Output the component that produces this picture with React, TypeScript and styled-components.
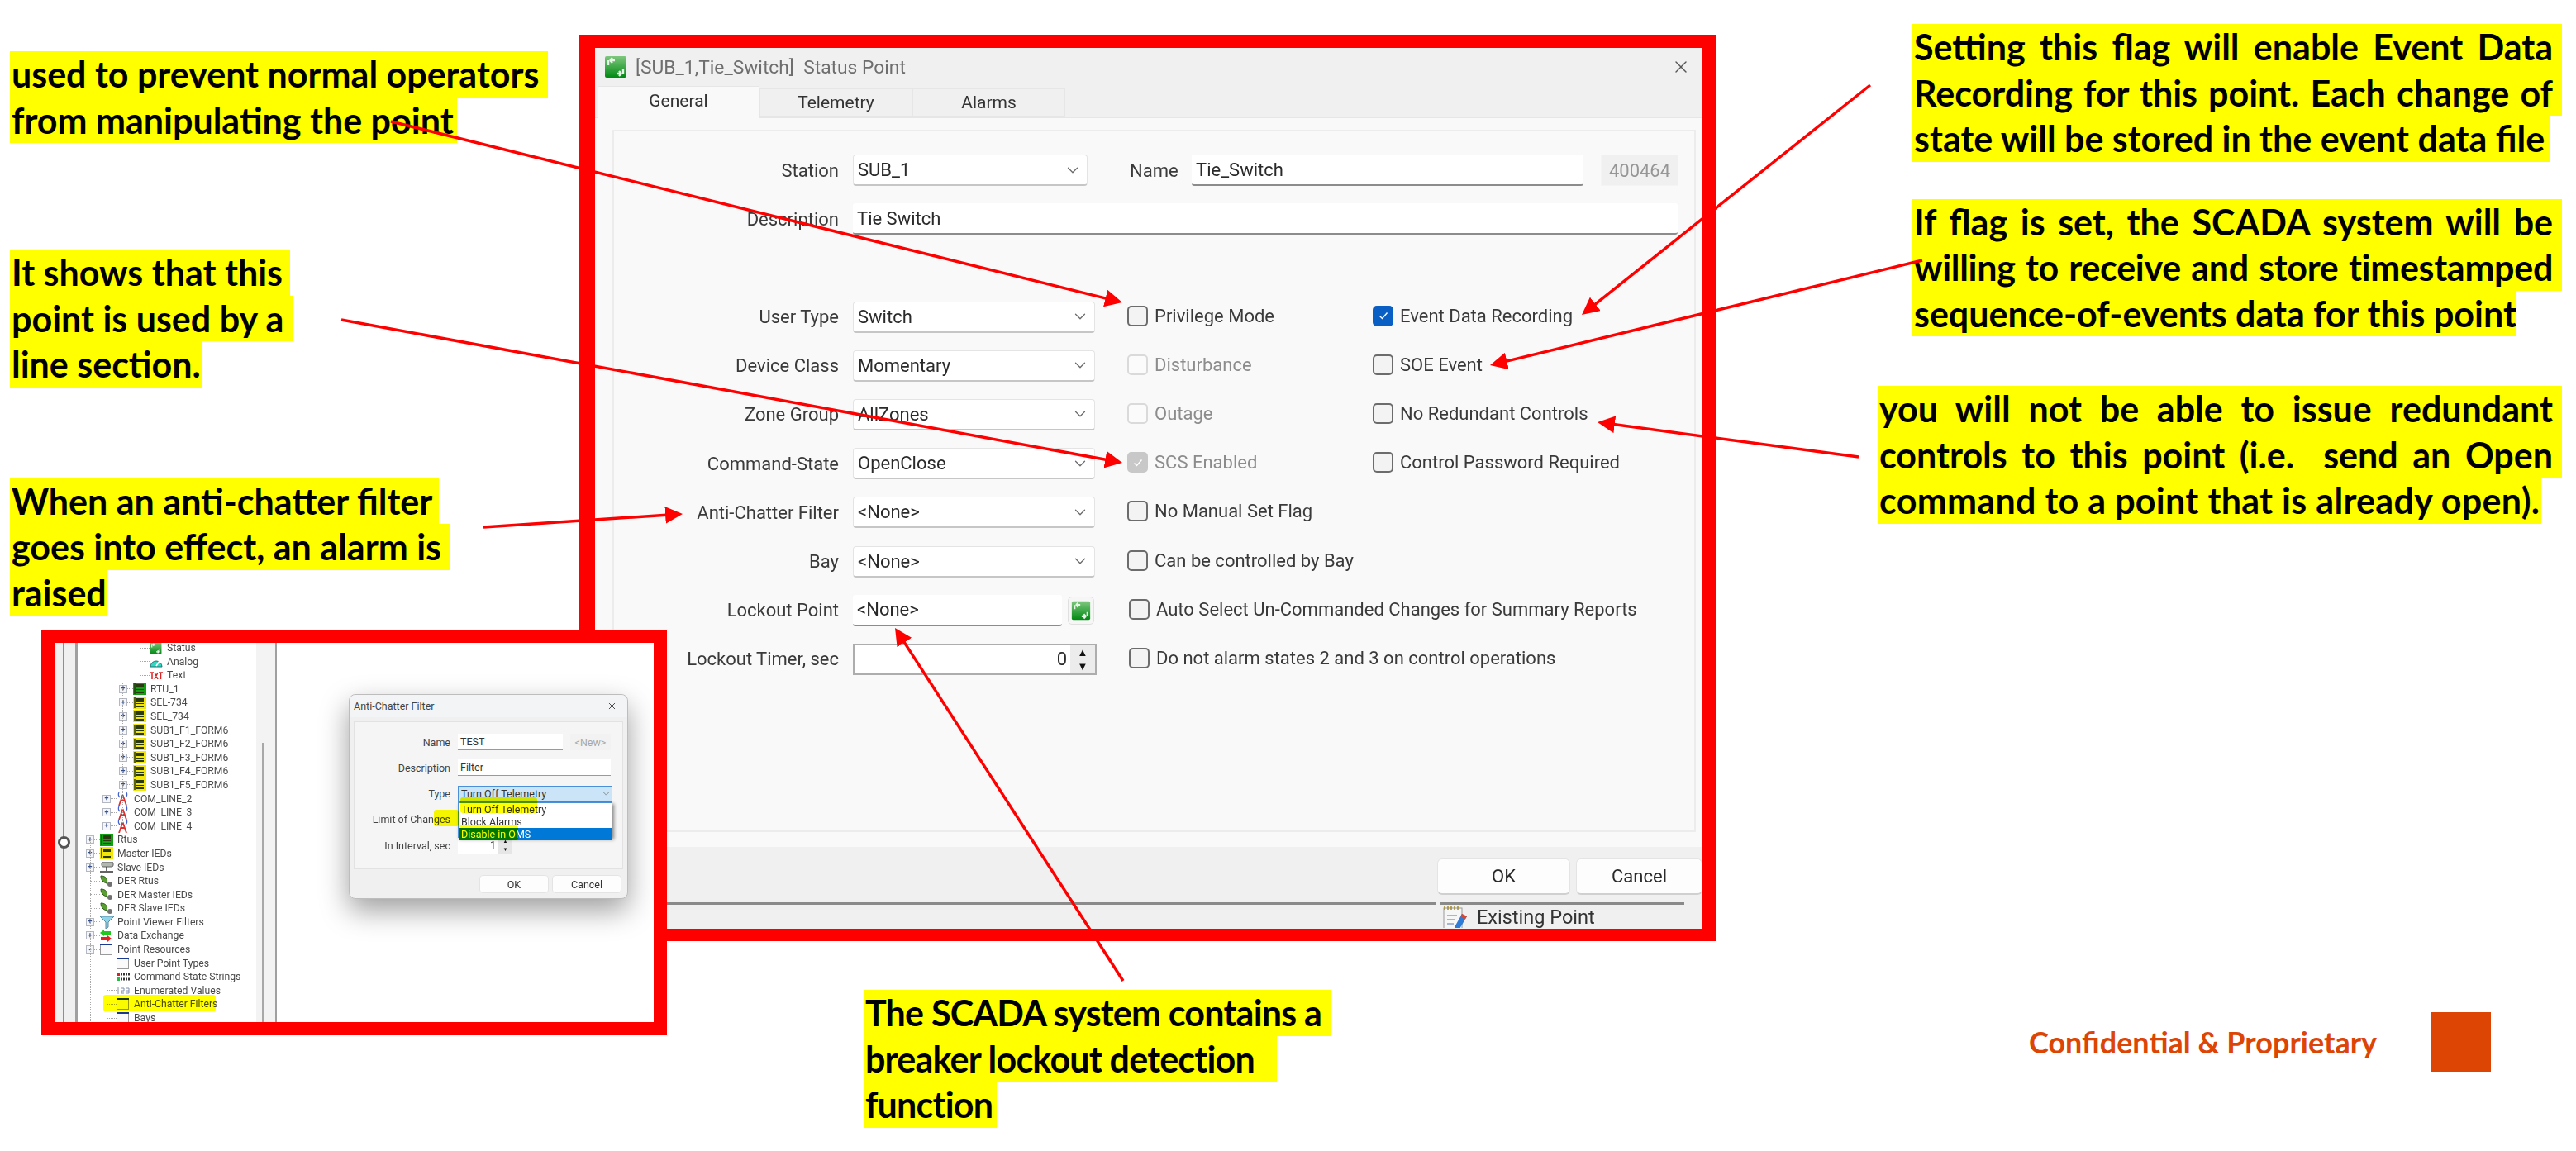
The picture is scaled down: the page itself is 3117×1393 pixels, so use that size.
import React from "react";
import styled, { createGlobalStyle } from "styled-components";
import { ChevronDown, X } from "lucide-react";

const RED = "#ff0000";
const YELLOW = "#ffff00";
const UI_FONT = `Roboto, "Liberation Sans", sans-serif`;

const GlobalStyle = createGlobalStyle`
  html, body {
    margin: 0;
    padding: 0;
    background: #ffffff;
  }
  * {
    box-sizing: border-box;
  }
`;

const Slide = styled.div`
  position: relative;
  display: flex;
  width: 3117px;
  height: 1393px;
  overflow: hidden;
  background: #ffffff;
  font-family: ${UI_FONT};
`;

const LeftColumn = styled.div`
  display: flex;
  flex-direction: column;
  align-items: flex-start;
  flex: none;
  width: 700px;
  padding: 62px 0 0 12px;
`;

const CenterColumn = styled.div`
  display: flex;
  flex-direction: column;
  flex: none;
  width: 1376px;
  padding-top: 42px;
`;

const RightColumn = styled.div`
  display: flex;
  flex-direction: column;
  align-items: flex-start;
  flex: none;
  width: 1041px;
  padding-top: 29px;
`;

/* ---------- yellow callouts ---------- */

const Note = styled.div<{ $top?: number; $left?: number }>`
  display: flex;
  flex-direction: column;
  align-items: flex-start;
  margin-top: ${(p) => p.$top ?? 0}px;
  margin-left: ${(p) => p.$left ?? 0}px;
`;

const NoteLine = styled.div<{ $width: number; $justify?: boolean; $spacing?: number }>`
  width: ${(p) => p.$width}px;
  height: 55.5px;
  padding: 0 ${(p) => (p.$justify ? 11 : 0)}px 0 2px;
  background: ${YELLOW};
  color: #000000;
  font-family: Lato, "Liberation Sans", sans-serif;
  font-size: 43px;
  font-weight: 700;
  line-height: 55px;
  white-space: nowrap;
  letter-spacing: ${(p) => p.$spacing ?? 0}px;
  text-align: ${(p) => (p.$justify ? "justify" : "left")};
  text-align-last: ${(p) => (p.$justify ? "justify" : "left")};
`;

const Confidential = styled.div`
  display: flex;
  align-items: center;
  gap: 66px;
  margin: 591px 0 0 379px;
  color: #dd4505;
  font-family: Lato, "Liberation Sans", sans-serif;
  font-size: 36px;
  font-weight: 700;
`;

const BrandSquare = styled.div`
  width: 72px;
  height: 72px;
  background: #dd4505;
`;

/* ---------- main dialog ---------- */

const MainFrame = styled.div`
  flex: none;
  width: 1376px;
  height: 1097px;
  border-style: solid;
  border-color: ${RED};
  border-width: 16px 16px 15px 20px;
`;

const Dialog = styled.div`
  display: flex;
  flex-direction: column;
  height: 100%;
  overflow: hidden;
  background: #f0f0f0;
  filter: blur(0.45px);
`;

const TitleBar = styled.div`
  display: flex;
  align-items: center;
  flex: none;
  height: 46px;
  padding: 0 14px 0 11px;
  gap: 10px;
  color: #6e6e6e;
  font-size: 22.8px;
`;

const TitleText = styled.span`
  flex: 1;
  white-space: pre;
`;

const TabStrip = styled.div`
  display: flex;
  align-items: flex-end;
  flex: none;
  height: 39px;
  padding-left: 3px;
  border-bottom: 2px solid #e6e6e6;
`;

const Tab = styled.div<{ $active?: boolean; $width: number }>`
  display: flex;
  align-items: center;
  justify-content: center;
  width: ${(p) => p.$width}px;
  height: ${(p) => (p.$active ? 39 : 34)}px;
  margin-bottom: ${(p) => (p.$active ? -2 : 0)}px;
  padding-bottom: ${(p) => (p.$active ? 4 : 0)}px;
  background: ${(p) => (p.$active ? "#f9f9f9" : "#f0f0f0")};
  border: 1px solid #e6e6e6;
  border-bottom: ${(p) => (p.$active ? "none" : "1px solid #e6e6e6")};
  color: #333333;
  font-size: 21px;
`;

const TabBody = styled.div`
  flex: none;
  height: 882px;
  padding: 14px 8px 18px 21px;
  background: #f9f9f9;
`;

const Panel = styled.div`
  display: grid;
  grid-auto-rows: 38px;
  row-gap: 21.2px;
  align-content: start;
  height: 100%;
  padding-top: 28px;
  border: 2px solid #ececec;
  background: #f9f9f9;
`;

const FormRow = styled.div`
  display: flex;
  align-items: center;
  color: #333333;
  font-size: 22px;
`;

const FieldLabel = styled.label`
  flex: none;
  width: 272px;
  margin-right: 17px;
  color: #3a3a3a;
  text-align: right;
  white-space: nowrap;
`;

const Combo = styled.div<{ $width?: number }>`
  display: flex;
  align-items: center;
  justify-content: space-between;
  flex: none;
  width: ${(p) => p.$width ?? 293}px;
  height: 38px;
  padding: 0 6px 0 5px;
  background: #ffffff;
  border: 1px solid #e4e4e4;
  border-bottom: 2px solid #c6c6c6;
  border-radius: 4px;
  color: #2a2a2a;
`;

const TextField = styled.div<{ $width: number }>`
  display: flex;
  align-items: center;
  flex: none;
  width: ${(p) => p.$width}px;
  height: 38px;
  padding-left: 5px;
  background: #ffffff;
  border-bottom: 2px solid #8c8c8c;
  border-radius: 3px;
  color: #2a2a2a;
  white-space: nowrap;
`;

const ReadOnlyBox = styled.div`
  display: flex;
  align-items: center;
  justify-content: center;
  flex: none;
  width: 94px;
  height: 38px;
  margin-left: 21px;
  background: #f0f0f0;
  border: 1px solid #f4f4f4;
  color: #969696;
`;

const InlineLabel = styled.label`
  flex: none;
  width: 57px;
  margin: 0 18px 0 51px;
  color: #3a3a3a;
`;

const PickButton = styled.div`
  display: flex;
  align-items: center;
  justify-content: center;
  flex: none;
  width: 32px;
  height: 34px;
  margin: 0 3px 0 7px;
  background: #f6f6f6;
  border: 1px solid #e0e0e0;
  border-radius: 5px;
`;

const SpinField = styled.div`
  display: flex;
  align-items: stretch;
  flex: none;
  width: 295px;
  height: 38px;
  background: #ffffff;
  border: 2px solid #adadad;
`;

const SpinValue = styled.div`
  flex: 1;
  padding-right: 4px;
  color: #2a2a2a;
  line-height: 34px;
  text-align: right;
`;

const SpinArrows = styled.div`
  display: flex;
  flex-direction: column;
  align-items: center;
  justify-content: space-around;
  flex: none;
  width: 30px;
  background: #ececec;
  color: #111111;
  font-size: 13px;
  line-height: 1;
`;

const CheckCell = styled.div<{ $width?: number; $dim?: boolean }>`
  display: flex;
  align-items: center;
  gap: 8px;
  flex: none;
  width: ${(p) => (p.$width ? `${p.$width}px` : "auto")};
  margin-top: -3px;
  color: ${(p) => (p.$dim ? "#8c8c8c" : "#3a3a3a")};
  white-space: nowrap;
`;

const CheckColumns = styled.div`
  display: flex;
  margin-left: 39px;
`;

const CheckBox = styled.span<{ $state: "off" | "on" | "dim" | "dimOn" }>`
  display: flex;
  align-items: center;
  justify-content: center;
  flex: none;
  width: 25px;
  height: 25px;
  border-radius: 5px;
  border: 2px solid
    ${(p) =>
      p.$state === "on"
        ? "#0a5fc4"
        : p.$state === "dimOn"
          ? "#c8c8c8"
          : p.$state === "dim"
            ? "#dadada"
            : "#6c6c6c"};
  background: ${(p) =>
    p.$state === "on"
      ? "#0a5fc4"
      : p.$state === "dimOn"
        ? "#c8c8c8"
        : p.$state === "dim"
          ? "#fbfbfb"
          : "#f3f3f3"};
`;

const Footer = styled.div`
  display: flex;
  flex-direction: column;
  flex: 1;
  min-height: 0;
  background: #f0f0f0;
`;

const ButtonRow = styled.div`
  display: flex;
  justify-content: flex-end;
  flex: none;
  gap: 7px;
  height: 67px;
  padding-top: 14px;
`;

const PushButton = styled.div<{ $width: number }>`
  display: flex;
  align-items: center;
  justify-content: center;
  flex: none;
  width: ${(p) => p.$width}px;
  height: 44px;
  background: #fdfdfd;
  border: 1px solid #e4e4e4;
  border-bottom: 2px solid #d0d0d0;
  border-radius: 6px;
  color: #2a2a2a;
  font-size: 22px;
`;

const StatusBar = styled.div`
  display: flex;
  flex: 1;
  gap: 5px;
  padding-right: 22px;
`;

const StatusCell = styled.div<{ $width?: number }>`
  display: flex;
  align-items: center;
  gap: 8px;
  flex: ${(p) => (p.$width ? "none" : 1)};
  width: ${(p) => (p.$width ? `${p.$width}px` : "auto")};
  padding-left: 2px;
  border-top: 3px solid #8a8a8a;
  color: #333333;
  font-size: 23.5px;
  line-height: 24px;
  white-space: nowrap;
`;

/* ---------- small inset picture ---------- */

const InsetFrame = styled.div`
  position: relative;
  z-index: 2;
  flex: none;
  width: 757px;
  height: 491px;
  margin: 17px 0 0 38px;
  border: 16px solid ${RED};
  background: #ffffff;
`;

const InsetContent = styled.div`
  position: relative;
  display: flex;
  height: 100%;
  overflow: hidden;
  filter: blur(0.45px);
`;

const SideStrip = styled.div`
  position: relative;
  flex: none;
  width: 28px;
  background: #f0f0f0;
  border-right: 3px solid #a0a0a0;
  &::before {
    content: "";
    position: absolute;
    top: 0;
    bottom: 0;
    left: 10px;
    width: 2px;
    background: #8f8f8f;
  }
`;

const SplitHandle = styled.span`
  position: absolute;
  top: 234px;
  left: 4px;
  width: 15px;
  height: 15px;
  background: #ffffff;
  border: 3px solid #555555;
  border-radius: 50%;
`;

const TreePane = styled.div`
  position: relative;
  flex: none;
  width: 216px;
  margin-top: -2.3px;
  color: #4a4a4a;
  font-size: 12.2px;
`;

const GuideLine = styled.span<{ $left: number; $top: number; $height: number }>`
  position: absolute;
  left: ${(p) => p.$left}px;
  top: ${(p) => p.$top}px;
  height: ${(p) => p.$height}px;
  border-left: 1px dotted #a8a8a8;
`;

const TreeRow = styled.div<{ $indent: number }>`
  display: flex;
  align-items: center;
  height: 16.6px;
  padding-left: ${(p) => p.$indent}px;
  white-space: nowrap;
`;

const TreeSlot = styled.span`
  display: flex;
  align-items: center;
  flex: none;
  width: 18px;
  height: 100%;
`;

const Expander = styled.span`
  display: flex;
  align-items: center;
  justify-content: center;
  flex: none;
  width: 10px;
  height: 10px;
  margin-left: 1px;
  background: #f4f6fa;
  border: 1px solid #b4b8c2;
  color: #38508a;
  font-size: 9px;
  font-weight: 700;
  line-height: 1;
`;

const TreeDash = styled.span<{ $full?: boolean }>`
  flex: 1;
  margin-left: ${(p) => (p.$full ? 6 : 0)}px;
  border-top: 1px dotted #a8a8a8;
`;

const TreeIconBox = styled.span`
  display: flex;
  align-items: center;
  flex: none;
  width: 21px;
`;

const TreeGutter = styled.div`
  position: relative;
  flex: none;
  width: 25px;
  background: #f3f3f3;
  border-right: 2px solid #a0a0a0;
`;

const ScrollThumb = styled.span`
  position: absolute;
  top: 121px;
  bottom: 0;
  left: 7px;
  width: 2px;
  background: #a8a8a8;
`;

const TreeMark = styled.span`
  position: absolute;
  left: 59px;
  top: 426px;
  width: 136px;
  height: 20px;
  background: ${YELLOW};
  border-radius: 3px;
  mix-blend-mode: multiply;
`;

const MiniDialog = styled.div`
  position: absolute;
  left: 356px;
  top: 62px;
  display: flex;
  flex-direction: column;
  width: 338px;
  height: 248px;
  background: #f0f0f0;
  border: 1px solid #bdbdbd;
  border-radius: 8px;
  box-shadow: 0 14px 34px rgba(0, 0, 0, 0.38);
  color: #444444;
  font-size: 12.5px;
`;

const MiniTitle = styled.div`
  display: flex;
  align-items: center;
  justify-content: space-between;
  flex: none;
  height: 27px;
  padding: 0 12px 0 5px;
  background: #f2f4f6;
  border-radius: 8px 8px 0 0;
`;

const MiniPanel = styled.div`
  position: relative;
  display: grid;
  grid-auto-rows: 20px;
  row-gap: 11.25px;
  align-content: start;
  flex: none;
  height: 179px;
  margin: 5px 5px 0 5px;
  padding-top: 14px;
  background: #f5f5f5;
  border: 1px solid #e2e2e2;
`;

const MiniRow = styled.div`
  display: flex;
  align-items: center;
`;

const MiniLabel = styled.label`
  flex: none;
  width: 116px;
  margin-right: 9px;
  text-align: right;
  white-space: nowrap;
`;

const MiniField = styled.div<{ $width: number; $filled?: boolean }>`
  display: flex;
  align-items: center;
  flex: none;
  width: ${(p) => p.$width}px;
  height: 20px;
  padding-left: 3px;
  background: ${(p) => (p.$filled ? "#cce4f7" : "#ffffff")};
  border: ${(p) => (p.$filled ? "1px solid #4a90d9" : "none")};
  border-bottom: ${(p) => (p.$filled ? "1px solid #4a90d9" : "1px solid #9a9a9a")};
  justify-content: ${(p) => (p.$filled ? "space-between" : "flex-start")};
  color: #333333;
`;

const MiniTag = styled.div`
  display: flex;
  align-items: center;
  justify-content: center;
  flex: none;
  width: 49px;
  height: 20px;
  margin-left: 9px;
  background: #f2f2f2;
  color: #a8a8a8;
`;

const MiniList = styled.div`
  position: absolute;
  left: 125px;
  top: 97px;
  display: flex;
  flex-direction: column;
  width: 187px;
  height: 43px;
  background: #ffffff;
  border: 1px solid #4a90d9;
  box-shadow: 2px 2px 4px rgba(0, 0, 0, 0.45);
  color: #333333;
`;

const MiniOption = styled.div<{ $selected?: boolean }>`
  display: flex;
  align-items: center;
  flex: 1;
  padding-left: 3px;
  background: ${(p) => (p.$selected ? "#0078d7" : "transparent")};
  color: ${(p) => (p.$selected ? "#ffffff" : "#333333")};
`;

const MiniMark = styled.span<{ $left: number; $top: number; $width: number; $height: number }>`
  position: absolute;
  left: ${(p) => p.$left}px;
  top: ${(p) => p.$top}px;
  width: ${(p) => p.$width}px;
  height: ${(p) => p.$height}px;
  background: ${YELLOW};
  border-radius: 3px;
  mix-blend-mode: multiply;
`;

const MiniButtons = styled.div`
  display: flex;
  justify-content: flex-end;
  flex: none;
  gap: 4px;
  padding: 7px 7px 0 0;
`;

const MiniButton = styled.div`
  display: flex;
  align-items: center;
  justify-content: center;
  width: 84px;
  height: 22px;
  background: #fdfdfd;
  border: 1px solid #e4e4e4;
  border-radius: 4px;
  color: #333333;
`;

const MiniSpin = styled.div`
  display: flex;
  flex: none;
  width: 66px;
  height: 20px;
  background: #ffffff;
`;

const MiniSpinValue = styled.div`
  flex: 1;
  padding-right: 3px;
  line-height: 20px;
  text-align: right;
`;

const MiniSpinArrows = styled.div`
  display: flex;
  flex-direction: column;
  align-items: center;
  justify-content: space-around;
  flex: none;
  width: 17px;
  background: #e6e6e6;
  color: #111111;
  font-size: 6px;
  line-height: 1;
`;

/* ---------- arrows on top of everything ---------- */

const ArrowLayer = styled.svg`
  position: absolute;
  left: 0;
  top: 0;
  z-index: 3;
  pointer-events: none;
`;

type NoteData = { text: string; width: number; justify?: boolean; spacing?: number };

const leftNotes: { top: number; lines: NoteData[] }[] = [
  {
    top: 0,
    lines: [
      { text: "used to prevent normal operators", width: 651 },
      { text: "from manipulating the point", width: 541 },
    ],
  },
  {
    top: 129,
    lines: [
      { text: "It shows that this", width: 339 },
      { text: "point is used by a", width: 342 },
      { text: "line section.", width: 232 },
    ],
  },
  {
    top: 110,
    lines: [
      { text: "When an anti-chatter filter", width: 519 },
      { text: "goes into effect, an alarm is", width: 533 },
      { text: "raised", width: 117 },
    ],
  },
];

const rightNotes: { top: number; left: number; lines: NoteData[] }[] = [
  {
    top: 0,
    left: 238,
    lines: [
      { text: "Setting this flag will enable Event Data", width: 786, justify: true },
      { text: "Recording for this point. Each change of", width: 786, justify: true },
      { text: "state will be stored in the event data file", width: 771 },
    ],
  },
  {
    top: 45,
    left: 238,
    lines: [
      { text: "If flag is set, the SCADA system will be", width: 786, justify: true },
      { text: "willing to receive and store timestamped", width: 786, justify: true, spacing: -0.3 },
      { text: "sequence-of-events data for this point", width: 730 },
    ],
  },
  {
    top: 60,
    left: 196,
    lines: [
      { text: "you will not be able to issue redundant", width: 828, justify: true },
      { text: "controls to this point (i.e.\u00a0 send an Open", width: 828, justify: true },
      { text: "command to a point that is already open).", width: 803, spacing: 0.3 },
    ],
  },
];

const bottomNote: NoteData[] = [
  { text: "The SCADA system contains a", width: 566, spacing: -0.8 },
  { text: "breaker lockout detection", width: 500, spacing: -0.8 },
  { text: "function", width: 161, spacing: -0.8 },
];

const arrows = [
  { x1: 473, y1: 147, x2: 1358, y2: 366 },
  { x1: 413, y1: 387, x2: 1358, y2: 560 },
  { x1: 585, y1: 638, x2: 826, y2: 622 },
  { x1: 2263, y1: 103, x2: 1914, y2: 381 },
  { x1: 2326, y1: 315, x2: 1803, y2: 442 },
  { x1: 2249, y1: 553, x2: 1933, y2: 511 },
  { x1: 1359, y1: 1187, x2: 1083, y2: 760 },
];

type CheckState = "off" | "on" | "dim" | "dimOn";

const optionRows: {
  label: string;
  control: React.ReactNode;
  left: [string, CheckState];
  right?: [string, CheckState];
}[] = [
  {
    label: "User Type",
    control: <SelectBox value="Switch" />,
    left: ["Privilege Mode", "off"],
    right: ["Event Data Recording", "on"],
  },
  {
    label: "Device Class",
    control: <SelectBox value="Momentary" />,
    left: ["Disturbance", "dim"],
    right: ["SOE Event", "off"],
  },
  {
    label: "Zone Group",
    control: <SelectBox value="AllZones" />,
    left: ["Outage", "dim"],
    right: ["No Redundant Controls", "off"],
  },
  {
    label: "Command-State",
    control: <SelectBox value="OpenClose" />,
    left: ["SCS Enabled", "dimOn"],
    right: ["Control Password Required", "off"],
  },
  {
    label: "Anti-Chatter Filter",
    control: <SelectBox value="<None>" />,
    left: ["No Manual Set Flag", "off"],
  },
  {
    label: "Bay",
    control: <SelectBox value="<None>" />,
    left: ["Can be controlled by Bay", "off"],
  },
  {
    label: "Lockout Point",
    control: (
      <>
        <TextField $width={253}>{"<None>"}</TextField>
        <PickButton>
          <StatusIcon size={24} />
        </PickButton>
      </>
    ),
    left: ["Auto Select Un-Commanded Changes for Summary Reports", "off"],
  },
  {
    label: "Lockout Timer, sec",
    control: (
      <SpinField>
        <SpinValue>0</SpinValue>
        <SpinArrows>
          <span>▲</span>
          <span>▼</span>
        </SpinArrows>
      </SpinField>
    ),
    left: ["Do not alarm states 2 and 3 on control operations", "off"],
  },
];

type TreeKind =
  | "status"
  | "analog"
  | "text"
  | "rtu"
  | "ied"
  | "tower"
  | "slave"
  | "leaf"
  | "funnel"
  | "exchange"
  | "window"
  | "strings"
  | "numbers";

const treeRows: { label: string; indent: number; kind: TreeKind; sign?: "+" | "-" }[] = [
  { label: "Status", indent: 69, kind: "status" },
  { label: "Analog", indent: 69, kind: "analog" },
  { label: "Text", indent: 69, kind: "text" },
  { label: "RTU_1", indent: 49, kind: "rtu", sign: "+" },
  { label: "SEL-734", indent: 49, kind: "ied", sign: "+" },
  { label: "SEL_734", indent: 49, kind: "ied", sign: "+" },
  { label: "SUB1_F1_FORM6", indent: 49, kind: "ied", sign: "+" },
  { label: "SUB1_F2_FORM6", indent: 49, kind: "ied", sign: "+" },
  { label: "SUB1_F3_FORM6", indent: 49, kind: "ied", sign: "+" },
  { label: "SUB1_F4_FORM6", indent: 49, kind: "ied", sign: "+" },
  { label: "SUB1_F5_FORM6", indent: 49, kind: "ied", sign: "+" },
  { label: "COM_LINE_2", indent: 29, kind: "tower", sign: "+" },
  { label: "COM_LINE_3", indent: 29, kind: "tower", sign: "+" },
  { label: "COM_LINE_4", indent: 29, kind: "tower", sign: "+" },
  { label: "Rtus", indent: 9, kind: "rtu", sign: "+" },
  { label: "Master IEDs", indent: 9, kind: "ied", sign: "+" },
  { label: "Slave IEDs", indent: 9, kind: "slave", sign: "+" },
  { label: "DER Rtus", indent: 9, kind: "leaf" },
  { label: "DER Master IEDs", indent: 9, kind: "leaf" },
  { label: "DER Slave IEDs", indent: 9, kind: "leaf" },
  { label: "Point Viewer Filters", indent: 9, kind: "funnel", sign: "+" },
  { label: "Data Exchange", indent: 9, kind: "exchange", sign: "+" },
  { label: "Point Resources", indent: 9, kind: "window", sign: "-" },
  { label: "User Point Types", indent: 29, kind: "window" },
  { label: "Command-State Strings", indent: 29, kind: "strings" },
  { label: "Enumerated Values", indent: 29, kind: "numbers" },
  { label: "Anti-Chatter Filters", indent: 29, kind: "window" },
  { label: "Bays", indent: 29, kind: "window" },
];

function StatusIcon({ size }: { size: number }) {
  return (
    <svg width={size} height={size} viewBox="0 0 28 28">
      <defs>
        <linearGradient id="statusGreen" x1="0" y1="0" x2="0" y2="1">
          <stop offset="0" stopColor="#7ec77e" />
          <stop offset="1" stopColor="#008a12" />
        </linearGradient>
      </defs>
      <rect x="1" y="1" width="26" height="26" rx="2" fill="url(#statusGreen)" />
      <path d="M13 6H7M7 6l3-3M7 6l3 3M5 6v6" stroke="#e8f4e8" strokeWidth="2.4" fill="none" />
      <path d="M15 22h6M21 22l-3-3M21 22l-3 3M23 22v-6" stroke="#e8f4e8" strokeWidth="2.4" fill="none" />
    </svg>
  );
}

function NotepadIcon() {
  return (
    <svg width="34" height="27" viewBox="0 0 34 30" preserveAspectRatio="xMidYMin slice">
      <rect x="2" y="3" width="22" height="27" fill="#f6f6f6" stroke="#9a9a9a" />
      <path d="M3 1v4M7 1v4M11 1v4M15 1v4M19 1v4" stroke="#a08a30" strokeWidth="1.5" />
      <path d="M6 12h12M6 17h10M6 22h8" stroke="#8aa0c8" strokeWidth="1.5" />
      <path d="M24 10l6 3-10 17-5 0 0-4z" fill="#2f7bd6" />
      <path d="M15 30l0-4 5 4z" fill="#e8b060" />
      <path d="M24 10l6 3-2 3-6-3z" fill="#d84830" />
    </svg>
  );
}

function TreeIcon({ kind }: { kind: TreeKind }) {
  switch (kind) {
    case "status":
      return <StatusIcon size={15} />;
    case "analog":
      return (
        <svg width="16" height="15" viewBox="0 0 16 15">
          <path d="M1 14a7 7 0 0 1 14 0z" fill="#30d8c0" stroke="#207070" />
          <path d="M8 13l4-6" stroke="#fff" strokeWidth="1.6" />
        </svg>
      );
    case "text":
      return (
        <svg width="17" height="11" viewBox="0 0 17 11">
          <rect width="17" height="11" fill="#fff" />
          <path d="M1 2h4M3 2v8M6 2l4 8M10 2l-4 8M11 2h5M13.500 2v8" stroke="#e02020" strokeWidth="1.5" />
        </svg>
      );
    case "rtu":
    case "ied":
      return (
        <svg width="16" height="15" viewBox="0 0 16 15">
          <rect width="16" height="15" fill={kind === "rtu" ? "#12a012" : "#f2e60a"} />
          <path d="M4 2h9v4H4zM4 8h9v1H4z" fill="#2a3a10" />
          <path d="M2 1v13" stroke="#2a3a10" strokeWidth="1.5" />
          <path d="M4 11h9v2H4z" fill="#2a3a10" />
        </svg>
      );
    case "tower":
      return (
        <svg width="15" height="17" viewBox="0 0 15 17">
          <path d="M7.500 4L3 17M7.500 4l4.500 13M5 11h5" stroke="#e03030" strokeWidth="1.8" fill="none" />
          <path d="M3 1a5 5 0 0 0 1 6M12 1a5 5 0 0 1-1 6" stroke="#4060d0" strokeWidth="1.2" fill="none" />
        </svg>
      );
    case "slave":
      return (
        <svg width="17" height="14" viewBox="0 0 17 14">
          <rect x="2" y="0" width="14" height="6" rx="2" fill="#b0b8b0" stroke="#606060" />
          <path d="M8 6v5M0 12h16" stroke="#303030" strokeWidth="1.4" />
        </svg>
      );
    case "leaf":
      return (
        <svg width="16" height="15" viewBox="0 0 16 15">
          <path d="M1 1c6 0 9 4 7 9C4 9 1 6 1 1z" fill="#5aa030" stroke="#2a5a18" />
          <circle cx="12" cy="11" r="3" fill="#707070" />
        </svg>
      );
    case "funnel":
      return (
        <svg width="17" height="16" viewBox="0 0 17 16">
          <path d="M0 1h17L10 8v6l-3 2V8z" fill="#8fd4e8" stroke="#5a8aa0" />
        </svg>
      );
    case "exchange":
      return (
        <svg width="14" height="15" viewBox="0 0 14 15">
          <path d="M0 4l5-4v2h8v4H5v2z" fill="#20c820" />
          <path d="M14 11l-5-4v2H1v4h8v2z" fill="#e82020" />
        </svg>
      );
    case "window":
      return (
        <svg width="15" height="14" viewBox="0 0 15 14">
          <rect x="0.500" y="0.500" width="14" height="13" fill="#fafafa" stroke="#9a9a9a" />
          <rect x="0" y="0" width="15" height="2" fill="#1a3a90" />
        </svg>
      );
    case "strings":
      return (
        <svg width="17" height="12" viewBox="0 0 17 12">
          <rect y="1" width="4" height="4" fill="#e02020" />
          <rect y="7" width="4" height="4" fill="#20c040" />
          <path d="M5 3h12M5 9h12" stroke="#333" strokeWidth="3" strokeDasharray="2 1" />
        </svg>
      );
    default:
      return (
        <svg width="17" height="8" viewBox="0 0 17 8">
          <path d="M2 0v8M6 1h3v3H6v3h3M12 1h3v6h-3M12 4h3" stroke="#8090b0" fill="none" />
        </svg>
      );
  }
}

function SelectBox({ value, width }: { value: string; width?: number }) {
  return (
    <Combo $width={width}>
      {value}
      <ChevronDown size={22} strokeWidth={1.4} color="#6a6a6a" />
    </Combo>
  );
}

function Check({ state }: { state: CheckState }) {
  return (
    <CheckBox $state={state}>
      {(state === "on" || state === "dimOn") && (
        <svg width="14" height="14" viewBox="0 0 14 14">
          <path d="M2.500 7.500l3 3 6-7" stroke="#ffffff" strokeWidth="1.4" fill="none" />
        </svg>
      )}
    </CheckBox>
  );
}

function NoteBlock({ lines, top, left }: { lines: NoteData[]; top?: number; left?: number }) {
  return (
    <Note $top={top} $left={left}>
      {lines.map((line) => (
        <NoteLine key={line.text} $width={line.width} $justify={line.justify} $spacing={line.spacing}>
          {line.text}
        </NoteLine>
      ))}
    </Note>
  );
}

function AntiChatterDialog() {
  return (
    <MiniDialog>
      <MiniTitle>
        Anti-Chatter Filter
        <X size={13} strokeWidth={1.6} color="#333333" />
      </MiniTitle>
      <MiniPanel>
        <MiniRow>
          <MiniLabel>Name</MiniLabel>
          <MiniField $width={127}>TEST</MiniField>
          <MiniTag>{"<New>"}</MiniTag>
        </MiniRow>
        <MiniRow>
          <MiniLabel>Description</MiniLabel>
          <MiniField $width={185}>Filter</MiniField>
        </MiniRow>
        <MiniRow>
          <MiniLabel>Type</MiniLabel>
          <MiniField $width={187} $filled>
            Turn Off Telemetry
            <ChevronDown size={13} strokeWidth={1.4} color="#6a6a6a" />
          </MiniField>
        </MiniRow>
        <MiniRow>
          <MiniLabel>Limit of Changes</MiniLabel>
        </MiniRow>
        <MiniRow>
          <MiniLabel>In Interval, sec</MiniLabel>
          <MiniSpin>
            <MiniSpinValue>1</MiniSpinValue>
            <MiniSpinArrows>
              <span>▲</span>
              <span>▼</span>
            </MiniSpinArrows>
          </MiniSpin>
        </MiniRow>
        <MiniList>
          <MiniOption>Turn Off Telemetry</MiniOption>
          <MiniOption>Block Alarms</MiniOption>
          <MiniOption $selected>Disable in OMS</MiniOption>
        </MiniList>
        <MiniMark $left={128} $top={91} $width={93} $height={19} />
        <MiniMark $left={126} $top={125} $width={72} $height={18} />
        <MiniMark $left={96} $top={106} $width={30} $height={20} />
      </MiniPanel>
      <MiniButtons>
        <MiniButton>OK</MiniButton>
        <MiniButton>Cancel</MiniButton>
      </MiniButtons>
    </MiniDialog>
  );
}

function InsetPicture() {
  return (
    <InsetFrame>
      <InsetContent>
        <SideStrip>
          <SplitHandle />
        </SideStrip>
        <TreePane>
          <GuideLine $left={15} $top={240} $height={222} />
          <GuideLine $left={35} $top={190} $height={60} />
          <GuideLine $left={35} $top={390} $height={75} />
          <GuideLine $left={54} $top={50} $height={170} />
          <GuideLine $left={75} $top={0} $height={44} />
          {treeRows.map((row) => (
            <TreeRow key={row.label} $indent={row.indent}>
              <TreeSlot>
                {row.sign ? <Expander>{row.sign}</Expander> : null}
                <TreeDash $full={!row.sign} />
              </TreeSlot>
              <TreeIconBox>
                <TreeIcon kind={row.kind} />
              </TreeIconBox>
              {row.label}
            </TreeRow>
          ))}
        </TreePane>
        <TreeGutter>
          <ScrollThumb />
        </TreeGutter>
        <TreeMark />
        <AntiChatterDialog />
      </InsetContent>
    </InsetFrame>
  );
}

function StatusPointDialog() {
  return (
    <MainFrame>
      <Dialog>
        <TitleBar>
          <StatusIcon size={28} />
          <TitleText>[SUB_1,Tie_Switch]  Status Point</TitleText>
          <X size={24} strokeWidth={1.4} color="#555555" />
        </TitleBar>
        <TabStrip>
          <Tab $active $width={196}>
            General
          </Tab>
          <Tab $width={185}>Telemetry</Tab>
          <Tab $width={185}>Alarms</Tab>
        </TabStrip>
        <TabBody>
          <Panel>
            <FormRow>
              <FieldLabel>Station</FieldLabel>
              <SelectBox value="SUB_1" width={284} />
              <InlineLabel>Name</InlineLabel>
              <TextField $width={474}>Tie_Switch</TextField>
              <ReadOnlyBox>400464</ReadOnlyBox>
            </FormRow>
            <FormRow>
              <FieldLabel>Description</FieldLabel>
              <TextField $width={998}>Tie Switch</TextField>
            </FormRow>
            <FormRow />
            {optionRows.map((row) => (
              <FormRow key={row.label}>
                <FieldLabel>{row.label}</FieldLabel>
                {row.control}
                <CheckColumns>
                  <CheckCell $width={297} $dim={row.left[1] === "dim" || row.left[1] === "dimOn"}>
                    <Check state={row.left[1]} />
                    {row.left[0]}
                  </CheckCell>
                  {row.right && (
                    <CheckCell>
                      <Check state={row.right[1]} />
                      {row.right[0]}
                    </CheckCell>
                  )}
                </CheckColumns>
              </FormRow>
            ))}
          </Panel>
        </TabBody>
        <Footer>
          <ButtonRow>
            <PushButton $width={161}>OK</PushButton>
            <PushButton $width={153}>Cancel</PushButton>
          </ButtonRow>
          <StatusBar>
            <StatusCell />
            <StatusCell $width={295}>
              <NotepadIcon />
              Existing Point
            </StatusCell>
          </StatusBar>
        </Footer>
      </Dialog>
    </MainFrame>
  );
}

function shortened(a: (typeof arrows)[number]) {
  const dx = a.x2 - a.x1;
  const dy = a.y2 - a.y1;
  const len = Math.hypot(dx, dy);
  return { x: a.x2 - (dx / len) * 12, y: a.y2 - (dy / len) * 12 };
}

export default function App() {
  return (
    <>
      <GlobalStyle />
      <Slide>
        <LeftColumn>
          {leftNotes.map((note) => (
            <NoteBlock key={note.lines[0].text} lines={note.lines} top={note.top} />
          ))}
          <InsetPicture />
        </LeftColumn>
        <CenterColumn>
          <StatusPointDialog />
          <NoteBlock lines={bottomNote} top={59} left={345} />
        </CenterColumn>
        <RightColumn>
          {rightNotes.map((note) => (
            <NoteBlock key={note.lines[0].text} lines={note.lines} top={note.top} left={note.left} />
          ))}
          <Confidential>
            Confidential &amp; Proprietary
            <BrandSquare />
          </Confidential>
        </RightColumn>
        <ArrowLayer width="3117" height="1393" viewBox="0 0 3117 1393">
          <defs>
            <marker id="head" viewBox="0 0 20 20" refX="20" refY="10" markerUnits="userSpaceOnUse" markerWidth="21" markerHeight="21" orient="auto">
              <path d="M0 0L20 10L0 20z" fill={RED} />
            </marker>
          </defs>
          {arrows.map((a) => {
            const end = shortened(a);
            return (
              <React.Fragment key={`${a.x1}-${a.y1}`}>
                <line x1={a.x1} y1={a.y1} x2={end.x} y2={end.y} stroke={RED} strokeWidth="3.5" />
                <path d={`M${a.x1} ${a.y1}L${a.x2} ${a.y2}`} stroke="none" fill="none" markerEnd="url(#head)" />
              </React.Fragment>
            );
          })}
        </ArrowLayer>
      </Slide>
    </>
  );
}
